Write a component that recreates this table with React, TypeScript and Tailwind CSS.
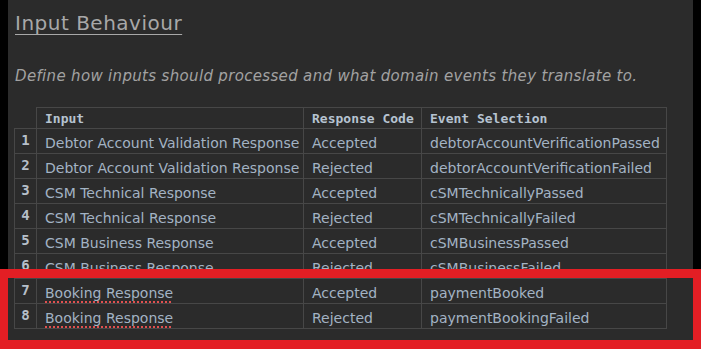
const rows = [
  { n: 1, input: 'Debtor Account Validation Response', code: 'Accepted', event: 'debtorAccountVerificationPassed' },
  { n: 2, input: 'Debtor Account Validation Response', code: 'Rejected', event: 'debtorAccountVerificationFailed' },
  { n: 3, input: 'CSM Technical Response', code: 'Accepted', event: 'cSMTechnicallyPassed' },
  { n: 4, input: 'CSM Technical Response', code: 'Rejected', event: 'cSMTechnicallyFailed' },
  { n: 5, input: 'CSM Business Response', code: 'Accepted', event: 'cSMBusinessPassed' },
  { n: 6, input: 'CSM Business Response', code: 'Rejected', event: 'cSMBusinessFailed' },
];

const booking = [
  { n: 7, input: 'Booking Response', code: 'Accepted', event: 'paymentBooked' },
  { n: 8, input: 'Booking Response', code: 'Rejected', event: 'paymentBookingFailed' },
];

type Row = { n: number; input: string; code: string; event: string };

const cell = 'border border-[#474747] px-2 pt-[3px] h-[25px] leading-[20px] align-middle whitespace-nowrap overflow-hidden';

const Cols = () => (
  <colgroup>
    <col className="w-[22px]" />
    <col className="w-[267px]" />
    <col className="w-[118px]" />
    <col className="w-[245px]" />
  </colgroup>
);

const BodyRow = ({ row, flagged }: { row: Row; flagged?: boolean }) => (
  <tr className="text-[#a3b3c4]">
    <td className="border border-[#474747] h-[25px] p-0 pb-[2px] text-center align-middle font-bold font-['DejaVu_Sans_Mono',monospace] text-[14px] leading-[20px] text-[#b6bfc9]">
      {row.n}
    </td>
    <td className={cell}>
      {flagged ? (
        <span className="underline decoration-dotted decoration-[#e0504f] decoration-2 underline-offset-[4px]">
          {row.input}
        </span>
      ) : (
        row.input
      )}
    </td>
    <td className={cell}>{row.code}</td>
    <td className={cell}>{row.event}</td>
  </tr>
);

export default function App() {
  return (
    <div className="w-[701px] h-[349px] bg-black flex flex-col overflow-hidden font-['DejaVu_Sans',sans-serif]">
      <div className="h-[269px] shrink-0 mx-[8px] bg-[#2b2b2b] overflow-hidden">
        <h1 className="pl-[7px] pt-[8px] text-[20px] leading-[30px] text-[#a8a8a8] tracking-[0.5px] underline decoration-1 underline-offset-[4px]">
          Input Behaviour
        </h1>
        <p className="pl-[7px] mt-[27px] text-[15px] leading-[22px] italic text-[#a2a2a2] tracking-[0.33px]">
          Define how inputs should processed and what domain events they translate to.
        </p>
        <table className="ml-[6px] mt-[20px] border-collapse table-fixed w-[652px] text-[14px]">
          <Cols />
          <thead>
            <tr className="font-['DejaVu_Sans_Mono',monospace] font-bold text-[13px] text-[#b6c3d1]">
              <th className="h-[21px] p-0" />
              <th className="border border-[#474747] px-2 py-0 leading-[19px] text-left font-bold whitespace-nowrap">Input</th>
              <th className="border border-[#474747] px-2 py-0 leading-[19px] text-left font-bold whitespace-nowrap">Response Code</th>
              <th className="border border-[#474747] px-2 py-0 leading-[19px] text-left font-bold whitespace-nowrap">Event Selection</th>
            </tr>
          </thead>
          <tbody>
            {rows.map((r) => (
              <BodyRow key={r.n} row={r} />
            ))}
          </tbody>
        </table>
      </div>
      <div className="h-[80px] shrink-0 border-y-[9px] border-x-[8px] border-[#e31e24] bg-[#2b2b2b]">
        <table className="ml-[6px] border-collapse table-fixed w-[652px] text-[14px]">
          <Cols />
          <tbody>
            {booking.map((r) => (
              <BodyRow key={r.n} row={r} flagged />
            ))}
          </tbody>
        </table>
      </div>
    </div>
  );
}
